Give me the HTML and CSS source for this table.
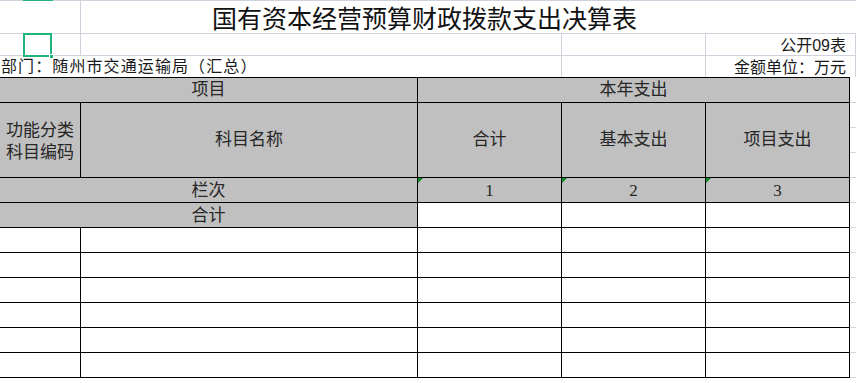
FILE: index.html
```html
<!DOCTYPE html>
<html lang="zh-CN">
<head>
<meta charset="utf-8">
<title>国有资本经营预算财政拨款支出决算表</title>
<link rel="stylesheet" href="styles.css">
</head>
<body>
<div class="sheet">
  <div class="top">
    <div class="tc a1"></div>
    <div class="tc title">国有资本经营预算财政拨款支出决算表</div>
    <div class="tc a2"></div>
    <div class="tc b2"></div>
    <div class="tc c2"></div>
    <div class="tc d2 right">公开09表</div>
    <div class="tc e2"></div>
    <div class="tc ab3 left">部门：随州市交通运输局（汇总）</div>
    <div class="tc c3"></div>
    <div class="tc d3 right">金额单位：万元</div>
    <div class="tc e3"></div>
  </div>
  <div class="body">
    <div class="grid">
      <div class="c g span2">项目</div>
      <div class="c g span3">本年支出</div>
      <div class="c g two"><span class="ln">功能分类</span><span class="ln">科目编码</span></div>
      <div class="c g">科目名称</div>
      <div class="c g">合计</div>
      <div class="c g">基本支出</div>
      <div class="c g">项目支出</div>
      <div class="c g span2 low">栏次</div>
      <div class="c g num low mark">1</div>
      <div class="c g num low mark">2</div>
      <div class="c g num low mark">3</div>
      <div class="c g span2 low">合计</div>
      <div class="c w"></div><div class="c w"></div><div class="c w"></div>
      <div class="c w"></div><div class="c w"></div><div class="c w"></div><div class="c w"></div><div class="c w"></div>
      <div class="c w"></div><div class="c w"></div><div class="c w"></div><div class="c w"></div><div class="c w"></div>
      <div class="c w"></div><div class="c w"></div><div class="c w"></div><div class="c w"></div><div class="c w"></div>
      <div class="c w"></div><div class="c w"></div><div class="c w"></div><div class="c w"></div><div class="c w"></div>
      <div class="c w"></div><div class="c w"></div><div class="c w"></div><div class="c w"></div><div class="c w"></div>
      <div class="c w"></div><div class="c w"></div><div class="c w"></div><div class="c w"></div><div class="c w"></div>
    </div>
    <div class="strip"></div>
  </div>
  <div class="select"><span class="handle"></span></div>
  <div class="topmark"></div>
</div>
</body>
</html>
```

FILE: styles.css
```css
* { box-sizing: border-box; }
html, body {
  margin: 0;
  padding: 0;
  background: #fff;
}
body {
  width: 856px;
  height: 383px;
  overflow: hidden;
  font-family: "Liberation Sans", "Noto Sans CJK SC", sans-serif;
  color: #1a1a1a;
  text-spacing-trim: space-all;
}
.sheet {
  position: relative;
  width: 856px;
  height: 383px;
}

/* top (spreadsheet rows above the table) */
.top {
  display: grid;
  grid-template-columns: 81px 481px 144px 150px 1fr;
  grid-template-rows: 34px 22px 21px;
}
.tc {
  font-size: 16px;
  line-height: 18px;
  white-space: nowrap;
  display: flex;
  align-items: center;
}
.a1 {
  border-top: 1px solid #cfd2dc;
  border-bottom: 1px solid #cfd2dc;
  border-right: 1px solid #cfd2dc;
}
.title {
  grid-column: 2 / 6;
  border-top: 1px solid #cfd2dc;
  border-bottom: 1px solid #cfd2dc;
  justify-content: center;
  padding-right: 88px;
  padding-top: 3px;
  font-size: 25px;
  line-height: 28px;
  color: #111;
}
.a2 { border-right: 1px solid #cfd2dc; border-bottom: 1px solid #cfd2dc; }
.b2 { border-right: 1px solid #cfd2dc; border-bottom: 1px solid #cfd2dc; }
.c2 { border-right: 1px solid #cfd2dc; border-bottom: 1px solid #cfd2dc; }
.d2 { border-right: 1px solid #cfd2dc; border-bottom: 1px solid #cfd2dc; }
.e2 { border-bottom: 1px solid #cfd2dc; }
.ab3 {
  grid-column: 1 / 3;
  border-right: 1px solid #cfd2dc;
  padding-left: 1px;
  padding-top: 1px;
  letter-spacing: 1.1px;
}
.c3 { border-right: 1px solid #cfd2dc; }
.d3 { border-right: 1px solid #cfd2dc; }
.right { justify-content: flex-end; padding-right: 9px; padding-top: 2px; }

/* the table */
.body {
  display: flex;
  align-items: flex-start;
}
.grid {
  display: grid;
  grid-template-columns: 80px 336px 143px 143px 143px;
  grid-template-rows: 24px 74px 24px 24px repeat(6, 24px);
  gap: 1px;
  padding: 1px 1px 1px 0;
  background: #000;
  width: 850px;
}
.c {
  font-size: 17px;
  line-height: 20px;
  display: flex;
  align-items: center;
  justify-content: center;
  text-align: center;
  color: #262626;
  position: relative;
}
.g { background: #c0c0c0; }
.w { background: #fff; }
.span2 { grid-column: span 2; }
.span3 { grid-column: span 3; }
.two {
  flex-direction: column;
  gap: 2px;
  padding-top: 4px;
}
.ln { display: block; line-height: 20px; }
.low { padding-top: 2px; }
.num {
  font-family: "Liberation Serif", serif;
  font-size: 17px;
}
.mark::before {
  content: "";
  position: absolute;
  left: 0;
  top: 0;
  width: 0;
  height: 0;
  border-top: 5px solid #0b8a1e;
  border-right: 5px solid transparent;
}
.strip {
  width: 6px;
  height: 301px;
  background-image: repeating-linear-gradient(to bottom, #fff 0, #fff 24px, #d3d6df 24px, #d3d6df 25px);
  background-position: 0 1px;
}

/* selected cell overlay */
.select {
  position: absolute;
  left: 23px;
  top: 33px;
  width: 29px;
  height: 24px;
  border: 2px solid #1fb57a;
}
.handle {
  position: absolute;
  right: -4px;
  bottom: -4px;
  width: 5px;
  height: 5px;
  background: #1fb57a;
  border: 1px solid #fff;
}
.topmark {
  position: absolute;
  left: 23px;
  top: 0;
  width: 30px;
  height: 1px;
  background: #1fb57a;
}
```
